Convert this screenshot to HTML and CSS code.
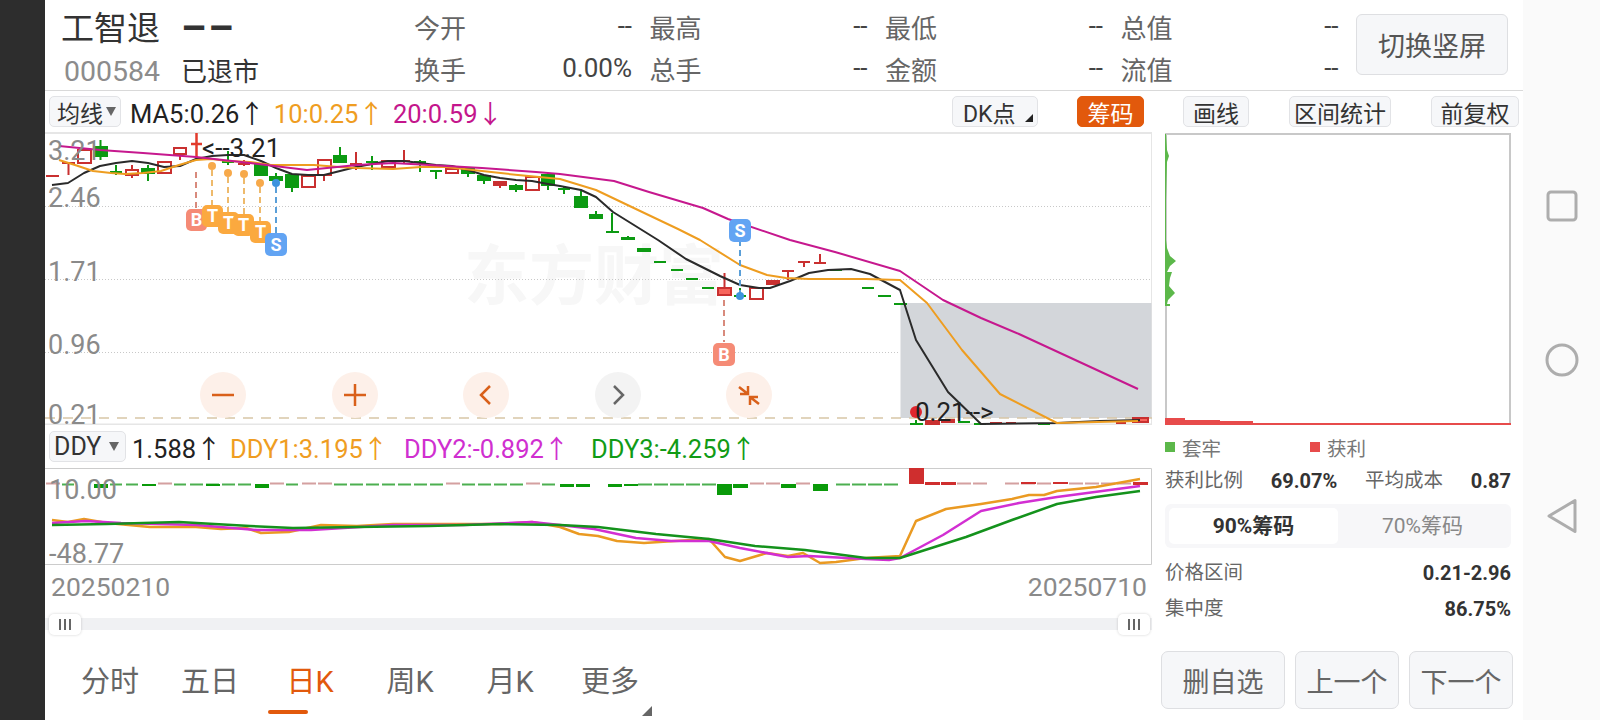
FILE: index.html
```html
<!DOCTYPE html>
<html lang="zh-CN">
<head>
<meta charset="utf-8">
<title>工智退 000584</title>
<link rel="stylesheet" href="styles.css">
</head>
<body>
<div class="app">
  <div class="gutter"></div>
  <main class="main">
    <header class="header">
      <div class="identity">
        <div class="name-row"><span class="name">工智退</span><span class="price">––</span></div>
        <div class="code-row"><span class="code">000584</span><span class="status">已退市</span></div>
      </div>
      <div class="quotes">
        <div class="quote"><span>今开</span><b>--</b></div>
        <div class="quote"><span>最高</span><b>--</b></div>
        <div class="quote"><span>最低</span><b>--</b></div>
        <div class="quote"><span>总值</span><b>--</b></div>
        <div class="quote"><span>换手</span><b>0.00%</b></div>
        <div class="quote"><span>总手</span><b>--</b></div>
        <div class="quote"><span>金额</span><b>--</b></div>
        <div class="quote"><span>流值</span><b>--</b></div>
      </div>
      <button class="rotate">切换竖屏</button>
    </header>

    <div class="toolbar">
      <span class="tool select ma-select">均线<i class="caret"></i></span>
      <span class="legend ma-legend">
        <span class="c-black">MA5:0.26↑</span>
        <span class="c-orange">10:0.25↑</span>
        <span class="c-pink">20:0.59↓</span>
      </span>
      <span class="tool dk">DK点<i class="corner"></i></span>
      <span class="tool chip-on">筹码</span>
      <span class="tool draw">画线</span>
      <span class="tool stat">区间统计</span>
      <span class="tool adj">前复权</span>
    </div>

    <div class="body">
      <section class="charts">
        <div class="chart">
          <div class="watermark">东方财富</div>
          <svg class="plot" width="1107" height="293" viewBox="45 132 1107 293">
            <path class="frame" d="M45 133H1152V425M45 424.5H1152"/>
            <path class="grid" d="M45 206.5H1152M45 279.5H1152M45 352.5H900"/>
            <rect class="zone" x="900.5" y="303" width="251" height="115"/>
            <path class="base" d="M45 418H1152"/>

            <path class="gc" d="M94 147h13v9h-13zM100.500 140V160M110 172h12M116 165V175M142 169h12v4h-12zM148 165V181M222 162h12M228 151V165M255 165h12v10h-12zM270 177h12v3h-12zM276 173V183M286 175h12v12h-12zM292 187V192M334 156h12v6h-12zM340 147V156M366 162h12M372 156V170M414 162h12M420 160V172M430 171h12M436 171V179M462 168h12v5h-12zM468 173V177M478 176h12v4h-12zM484 180V184M510 186h12v3h-12zM516 184V192M542 175h12v10h-12zM548 173V190M558 189h12M564 186V194M575 197h12v10h-12zM581 191V197M590 215h12v3h-12zM596 211V215M606 232h13M612 213V232M622 238h12v1h-12zM628 236V238M638 249h12v2h-12zM654 262h12M671 270h12M686 279h12M702 288h12M734 296h12M740 288V299M830 270h12M846 279h12M862 288h12M878 296h13M894 304h13M910 424h13M916 420V425M958 422h12M974 424h12M1038 424h12"/>
            <path class="rc" d="M46 176h13M62 163h13M68.500 163V175M78 150h13v13h-13zM126 170h12v5h-12zM132 165V170M132 175V178M158 162h13v11h-13zM174 148h12v6h-12zM180 154V160M238 164h12M244 160V166M302 176h13v11h-13zM318 160h13v15h-13zM324 175V181M350 164h12M356 152V170M382 161h13v6h-13zM398 161h12M404 150V163M446 169h12v4h-12zM500 174V174M526 177h13v13h-13zM750 288h13v11h-13zM782 271h12M788 271V280M798 262h12M804 262V267M814 263h12M820 254V263M990 423h12M1006 423h10M1116 423h10"/>
            <path class="rf" d="M494 182h12v3h-12zM500 185V188M767 281h12v3h-12zM926 421h13v4h-13zM942 420h12v2h-12z"/>
            <path class="rb" d="M191 144h11M196.500 133V158"/>
            <path class="rp" d="M718 288h13v7h-13zM724.500 273V288M1133 418h15v4h-15z"/>

            <polyline class="ma5" points="52,185 68,183 84,173 100,166 116,163 132,161 148,163 164,167 180,166 196,159 212,156 228,155 244,155 261,161 276,168 292,174 308,175 324,175 340,171 356,167 372,164 388,161 404,161 420,163 436,165 452,166 468,170 484,175 500,178 516,180 532,181 548,184 560,186 581,190 596,197 613,212 658,240 686,259 720,276 740,285 759,288 770,288 790,281 809,273 828,270 851,269 870,274 885,282 900,290 916,340 948,392 981,424 1057,423 1100,421 1140,420"/>
            <polyline class="ma10" points="59,160 75,165 93,171 111,173 125,174 143,173 161,171 179,165 196,160 211,159 228,161 250,162 271,165 292,165 314,165 339,167 357,168 393,169 421,167 446,167 482,171 518,175 560,179 596,190 638,210 678,229 700,240 740,265 767,275 786,278 809,279 866,279 900,280 927,303 962,350 1000,394 1057,423 1138,421"/>
            <polyline class="ma20" points="59,146 100,150 143,153 196,157 250,163 307,170 357,165 393,163 429,165 482,168 536,172 560,174 614,181 649,192 703,208 728,219 790,240 835,252 900,271 943,300 981,318 1019,334 1138,389"/>

            <path class="d-b" d="M196 172V210"/>
            <path class="d-t" d="M212 170V208M228 177V214M244 178V216M260 187V222"/>
            <path class="d-s" d="M276 187V234M740 240V296"/>
            <path class="d-b" d="M724 300V342"/>
            <circle class="dot-t" cx="212" cy="166" r="4"/>
            <circle class="dot-t" cx="228" cy="173" r="4"/>
            <circle class="dot-t" cx="244" cy="174" r="4"/>
            <circle class="dot-t" cx="260" cy="183" r="4"/>
            <circle class="dot-s" cx="276" cy="183" r="4"/>
            <circle class="dot-s" cx="740" cy="296" r="4"/>
            <circle class="dot-r" cx="916" cy="412" r="6"/>

            <rect class="bd-b" x="186" y="209" width="21" height="22" rx="5"/><text class="bd-text" x="196.500" y="226">B</text>
            <rect class="bd-t" x="202" y="205" width="21" height="22" rx="5"/><text class="bd-text" x="212.500" y="222">T</text>
            <rect class="bd-t" x="218" y="212" width="21" height="22" rx="5"/><text class="bd-text" x="228.500" y="229">T</text>
            <rect class="bd-t" x="233" y="214" width="21" height="22" rx="5"/><text class="bd-text" x="243.500" y="231">T</text>
            <rect class="bd-t" x="250" y="221" width="21" height="22" rx="5"/><text class="bd-text" x="260.500" y="238">T</text>
            <rect class="bd-s" x="265" y="233" width="22" height="23" rx="5"/><text class="bd-text" x="276" y="251">S</text>
            <rect class="bd-s" x="729" y="219" width="22" height="23" rx="5"/><text class="bd-text" x="740" y="237">S</text>
            <rect class="bd-b" x="713" y="343" width="22" height="23" rx="5"/><text class="bd-text" x="724" y="361">B</text>

            <text class="axis" x="48" y="160">3.21</text>
            <text class="axis" x="48" y="207">2.46</text>
            <text class="axis" x="48" y="281">1.71</text>
            <text class="axis" x="48" y="354">0.96</text>
            <text class="axis" x="48" y="424">0.21</text>
            <text class="note" x="202" y="157">&lt;--3.21</text>
            <text class="note" x="915" y="421">0.21--&gt;</text>
          </svg>
          <div class="zoom-controls">
            <span class="round"><svg width="24" height="24" viewBox="0 0 24 24"><path class="ico" d="M1 12H23"/></svg></span>
            <span class="round"><svg width="24" height="24" viewBox="0 0 24 24"><path class="ico" d="M1 12H23M12 1V23"/></svg></span>
            <span class="round"><svg width="24" height="24" viewBox="0 0 24 24"><path class="ico" d="M16 3L7 12L16 21"/></svg></span>
            <span class="round off"><svg width="24" height="24" viewBox="0 0 24 24"><path class="ico-off" d="M8 3L17 12L8 21"/></svg></span>
            <span class="round"><svg width="24" height="24" viewBox="0 0 24 24"><path class="ico" d="M2 4L11 11M11 3V11H3M22 21L13 14M13 22V14H21"/></svg></span>
          </div>
        </div>

        <div class="ddy-bar">
          <span class="tool select ddy-select">DDY<i class="caret"></i></span>
          <span class="legend ddy-val c-black">1.588↑</span>
          <span class="legend ddy1 c-orange">DDY1:3.195↑</span>
          <span class="legend ddy2 c-violet">DDY2:-0.892↑</span>
          <span class="legend ddy3 c-green">DDY3:-4.259↑</span>
        </div>

        <div class="sub-chart">
          <svg class="plot" width="1107" height="97" viewBox="45 468 1107 97">
            <path class="frame2" d="M45 468.500H1151.500V564.500H45"/>
            <path class="bar-gt" d="M62 484.500h12M110 484.500h12M126 484.500h12M174 484.500h12M190 484.500h13M206 484.500h13M222 484.500h13M238 484.500h13M286 484.500h12M334 484.500h13M350 484.500h13M366 484.500h13M382 484.500h13M398 484.500h13M414 484.500h13M430 484.500h13M462 484.500h13M478 484.500h13M494 484.500h13M510 484.500h13M542 484.500h13M638 484.500h14M654 484.500h14M670 484.500h14M686 484.500h14M702 484.500h14M836 484.500h14M852 484.500h14M868 484.500h14M884 484.500h14"/>
            <path class="bar-rt" d="M46 483.500h14M158 483.500h14M270 483.500h14M302 483.500h14M318 483.500h14M446 483.500h14M526 483.500h14M750 483.500h14M766 483.500h14M772 483.500h1M796 483.500h14M957 483.500h14M973 483.500h14M1005 483.500h14M1021 483.500h14M1037 483.500h14M1069 483.500h14M1085 483.500h14M1101 483.500h14M1117 483.500h14"/>
            <path class="bar-g" d="M94 484h14v4h-14zM142 484h14v2h-14zM206 484h14v2h-14zM255 484h14v4h-14zM560 484h14v3h-14zM576 484h14v3h-14zM608 484h14v3h-14zM624 484h14v2h-14zM717 484h15v11h-15zM733 484h15v4h-15zM781 484h15v4h-15zM813 484h15v7h-15z"/>
            <path class="bar-r" d="M909 468h15v16h-15zM925 482h15v3h-15zM941 482h15v3h-15zM1021 482h15v2h-15zM1053 482h15v2h-15zM1133 482h15v3h-15z"/>
            <polyline class="l-orange" points="52,520 68,522 84,519 107,523 150,527 196,527 221,529 246,528 261,533 289,532 321,525 357,526 393,524 500,524 532,522 560,527 579,534 598,536 617,541 644,543 675,541 709,539 725,557 740,561 767,553 788,556 803,553 820,563 836,562 866,558 900,556 916,521 946,509 981,504 1012,499 1029,495 1044,495 1057,491 1096,487 1140,479"/>
            <polyline class="l-violet" points="52,523 86,521 121,523 196,525 257,530 311,530 393,525 464,525 532,522 560,525 594,529 636,538 671,541 709,541 740,548 788,557 809,556 866,559 889,560 900,558 943,535 981,511 1019,503 1057,497 1140,486"/>
            <polyline class="l-green" points="52,525 107,524 179,522 250,526 293,528 357,527 429,526 500,524 560,525 598,527 656,534 709,539 755,546 805,550 866,558 900,558 966,537 1012,520 1057,504 1096,497 1140,491"/>
            <text class="axis" x="49" y="499">10.00</text>
            <text class="axis" x="49" y="563">-48.77</text>
          </svg>
        </div>

        <div class="dates"><span>20250210</span><span>20250710</span></div>
        <div class="slider">
          <span class="handle"><i></i><i></i><i></i></span>
          <span class="handle"><i></i><i></i><i></i></span>
        </div>
        <nav class="tabs">
          <span class="tab">分时</span>
          <span class="tab">五日</span>
          <span class="tab active">日K</span>
          <span class="tab">周K</span>
          <span class="tab">月K</span>
          <span class="tab more">更多<i class="corner big"></i></span>
        </nav>
      </section>

      <aside class="side">
        <svg class="chips" width="346" height="293" viewBox="1165 132 346 293">
          <path class="chip-frame" d="M1166 425V134H1510V425"/>
          <path class="chip-green" d="M1165 134H1166L1167 150L1169 156L1167 162L1166 200L1166 240L1167 248L1170 256L1176 261L1170 266L1167 272L1172 272L1170 278L1169 286L1175 293L1168 300L1167 304H1170V306H1165Z"/>
          <path class="chip-red" d="M1165 425V418H1185V420H1220V421H1253V423H1511V425Z"/>
        </svg>
        <div class="chip-legend">
          <span class="key"><i class="sq-g"></i>套牢</span>
          <span class="key"><i class="sq-r"></i>获利</span>
        </div>
        <div class="row stats"><span>获利比例</span><b>69.07%</b><span>平均成本</span><b>0.87</b></div>
        <div class="seg"><span class="seg-on">90%筹码</span><span>70%筹码</span></div>
        <div class="row range"><span>价格区间</span><b>0.21-2.96</b></div>
        <div class="row conc"><span>集中度</span><b>86.75%</b></div>
        <div class="actions">
          <button class="act act-wide">删自选</button>
          <button class="act">上一个</button>
          <button class="act">下一个</button>
        </div>
      </aside>
    </div>
  </main>
  <aside class="sysnav">
    <svg width="32" height="32" viewBox="0 0 32 32"><rect class="sys" x="2" y="2" width="28" height="28" rx="3"/></svg>
    <svg width="34" height="34" viewBox="0 0 34 34"><circle class="sys" cx="17" cy="17" r="15"/></svg>
    <svg width="32" height="36" viewBox="0 0 32 36"><path class="sys" d="M29 2.500V33.500L3 18Z"/></svg>
  </aside>
</div>
</body>
</html>
```

FILE: styles.css
```css
* { box-sizing: border-box; }
html, body { margin: 0; padding: 0; }
body {
  width: 1600px;
  height: 720px;
  overflow: hidden;
  background: #fff;
  font-family: Roboto, "Noto Sans CJK SC", sans-serif;
  color: #222;
}
i { font-style: normal; }
button { font-family: inherit; cursor: default; }

.app { display: flex; width: 1600px; height: 720px; }
.gutter { width: 45px; background: #2d2d2d; flex: none; }
.main { width: 1478px; flex: none; display: flex; flex-direction: column; background: #fff; }
.sysnav {
  width: 77px;
  flex: none;
  background: #fafafa;
  display: flex;
  flex-direction: column;
  align-items: center;
  padding-top: 190px;
  gap: 121px;
}
.sys { fill: none; stroke: #adadad; stroke-width: 3; stroke-linejoin: round; }

/* header */
.header {
  height: 91px;
  border-bottom: 1px solid #d9d9d9;
  display: flex;
  flex: none;
  position: relative;
}
.identity { width: 369px; padding-left: 16px; }
.name-row { display: flex; align-items: center; height: 58px; }
.name { font-size: 33px; color: #333; width: 120px; line-height: 58px; }
.price { font-size: 40px; font-weight: 700; color: #333; line-height: 58px; letter-spacing: 2px; }
.code-row { display: flex; align-items: center; height: 28px; }
.code { font-size: 28.500px; color: #8c8c8c; width: 120px; padding-left: 3px; line-height: 28px; }
.status { font-size: 26px; color: #333; line-height: 28px; }
.quotes {
  display: grid;
  grid-template-columns: repeat(4, 218px);
  column-gap: 17.500px;
  grid-auto-rows: 42px;
  width: 925px;
  padding-top: 5px;
}
.quote { display: flex; justify-content: space-between; align-items: center; font-size: 26px; }
.quote span { color: #666; }
.quote b { font-weight: 400; color: #444; }
.rotate {
  position: absolute;
  left: 1311px;
  top: 14px;
  width: 152px;
  height: 61px;
  background: #f6f7f9;
  border: 1px solid #dedfe2;
  border-radius: 6px;
  font-size: 27px;
  color: #555;
  padding: 0;
}

/* toolbar */
.toolbar { height: 41px; flex: none; display: flex; align-items: center; padding: 0 4px; }
.tool {
  height: 31px;
  display: flex;
  align-items: center;
  justify-content: center;
  background: #f6f7f9;
  border: 1px solid #e2e3e6;
  border-radius: 5px;
  font-size: 23px;
  color: #333;
  position: relative;
}
.select { justify-content: flex-start; padding-left: 6px; }
.ma-select { width: 72px; padding-left: 7px; }
.caret {
  width: 0;
  height: 0;
  margin-left: 3px;
  border: 5px solid transparent;
  border-top: 9px solid #666;
  border-bottom: 0;
}
.corner {
  position: absolute;
  right: 4px;
  bottom: 4px;
  width: 8px;
  height: 8px;
  background: #222;
  clip-path: polygon(100% 0, 100% 100%, 0 100%);
}
.legend { font-size: 25.500px; white-space: nowrap; }
.ma-legend { display: flex; margin-left: 9px; gap: 9px; }
.c-black { color: #222; }
.c-orange { color: #ef9d22; }
.c-pink { color: #c4168c; }
.c-violet { color: #d02fd0; }
.c-green { color: #119b16; }
.dk { width: 86px; margin-left: auto; justify-content: flex-start; padding-left: 10px; }
.chip-on { width: 67px; margin-left: 39px; background: #e2590c; border-color: #e2590c; color: #fff; }
.draw { width: 66px; margin-left: 39px; }
.stat { width: 102px; margin-left: 40px; }
.adj { width: 88px; margin-left: 40px; }

/* body */
.body { display: flex; flex: 1; min-height: 0; }
.charts { width: 1107px; flex: none; display: flex; flex-direction: column; }
.chart { height: 293px; flex: none; position: relative; }
.plot { display: block; position: relative; }
.watermark {
  position: absolute;
  left: 419px;
  top: 105px;
  font-size: 65px;
  line-height: 80px;
  font-weight: 700;
  color: #f7f7f7;
  white-space: nowrap;
}
.frame { fill: none; stroke: #e6e6e6; stroke-width: 2; }
.grid { stroke: #c8c8c8; stroke-width: 1; stroke-dasharray: 1 2; fill: none; }
.base { stroke: #d8c6a6; stroke-width: 1.500; stroke-dasharray: 10 8; fill: none; }
.zone { fill: #d3d6da; }
.gc { fill: #0c9a12; stroke: #0c9a12; stroke-width: 2; }
.rc { fill: none; stroke: #c93030; stroke-width: 2; }
.rf { fill: #c93030; stroke: #c93030; stroke-width: 2; }
.rb { fill: none; stroke: #e23b2c; stroke-width: 2.500; }
.rp { fill: #f7655c; stroke: #c93030; stroke-width: 2; }
.ma5 { fill: none; stroke: #2a2a2a; stroke-width: 2; stroke-linejoin: round; }
.ma10 { fill: none; stroke: #ee9d20; stroke-width: 2; stroke-linejoin: round; }
.ma20 { fill: none; stroke: #c6188e; stroke-width: 2; stroke-linejoin: round; }
.d-b, .d-t, .d-s { fill: none; stroke-width: 2; stroke-dasharray: 6 4; }
.d-b { stroke: #d88a7c; }
.d-t { stroke: #eeba6c; }
.d-s { stroke: #5a9fd8; }
.dot-t { fill: #f7a94a; }
.dot-s { fill: #3d93de; }
.dot-r { fill: #e0262e; }
.bd-b { fill: #f58b76; }
.bd-t { fill: #fba93f; }
.bd-s { fill: #62a4f3; }
.bd-text { fill: #fff; font-size: 18px; font-weight: 700; text-anchor: middle; font-family: Roboto, sans-serif; }
.axis { fill: #8a8a8a; font-size: 27px; font-family: Roboto, sans-serif; }
.note { fill: #222; font-size: 26px; font-family: Roboto, sans-serif; }
.zoom-controls {
  position: absolute;
  left: 155px;
  top: 240px;
  display: flex;
  gap: 85.500px;
}
.round {
  width: 46px;
  height: 46px;
  border-radius: 50%;
  background: #fdf0e9;
  display: flex;
  align-items: center;
  justify-content: center;
}
.round.off { background: #f3f3f3; }
.ico { fill: none; stroke: #d9601a; stroke-width: 2.500; }
.ico-off { fill: none; stroke: #666; stroke-width: 2.500; }

.ddy-bar { height: 43px; flex: none; display: flex; align-items: center; position: relative; padding-left: 4px; }
.ddy-select { width: 77px; padding-left: 4px; font-size: 25px; }
.ddy-select .caret { margin-left: 8px; }
.ddy-val { margin-left: 6px; width: 98px; }
.ddy1 { width: 174px; }
.ddy2 { width: 187px; }

.sub-chart { height: 97px; flex: none; }
.frame2 { fill: none; stroke: #cccccc; stroke-width: 1; }
.bar-gt { fill: none; stroke: #4caf50; stroke-width: 2; }
.bar-rt { fill: none; stroke: #d4a0a0; stroke-width: 2; }
.bar-g { fill: #0a9a0a; }
.bar-r { fill: #cf2e2e; }
.l-orange { fill: none; stroke: #ea9a22; stroke-width: 2.500; stroke-linejoin: round; }
.l-violet { fill: none; stroke: #d22fd2; stroke-width: 2.500; stroke-linejoin: round; }
.l-green { fill: none; stroke: #14921c; stroke-width: 2.500; stroke-linejoin: round; }

.dates {
  height: 53px;
  flex: none;
  display: flex;
  justify-content: space-between;
  padding: 8px 5px 0 6px;
  font-size: 26.500px;
  line-height: 28px;
  color: #8a8a8a;
}
.slider {
  height: 12px;
  flex: none;
  background: #f0f1f3;
  display: flex;
  justify-content: space-between;
  align-items: center;
  padding: 0 2px 0 4px;
}
.handle {
  width: 32px;
  height: 21px;
  background: #fff;
  border-radius: 5px;
  box-shadow: 0 0 3px rgba(0, 0, 0, .18);
  display: flex;
  align-items: center;
  justify-content: center;
  gap: 3px;
}
.handle i { width: 2px; height: 11px; background: #666; }

.tabs {
  display: grid;
  grid-template-columns: repeat(6, 100px);
  padding: 36px 0 0 15px;
}
.tab { position: relative; text-align: center; font-size: 29px; line-height: 32px; color: #666; }
.tab.active { color: #e2590c; }
.tab.active::after {
  content: "";
  display: block;
  width: 40px;
  height: 4px;
  margin: 12px 0 0 8px;
  border-radius: 2px;
  background: #e2590c;
}
.more .corner.big { right: 8px; bottom: -2px; width: 10px; height: 10px; background: #666; }

/* right column */
.side { width: 371px; flex: none; padding-left: 13px; display: flex; flex-direction: column; }
.chips { display: block; flex: none; }
.chip-frame { fill: none; stroke: #c8c8c8; stroke-width: 2; }
.chip-green { fill: #5cb84a; }
.chip-red { fill: #e74b4b; }
.chip-legend { height: 44px; flex: none; display: grid; grid-template-columns: 145px 145px; align-items: center; }
.key { display: flex; align-items: center; font-size: 19.500px; color: #777; }
.sq-g, .sq-r { width: 10px; height: 10px; margin-right: 7px; }
.sq-g { background: #5cb84a; }
.sq-r { background: #e74b4b; }
.row {
  display: flex;
  justify-content: space-between;
  align-items: center;
  width: 346px;
  font-size: 19.500px;
  line-height: 24px;
  color: #666;
}
.row b { color: #333; font-size: 20px; font-weight: 700; }
.seg {
  width: 346px;
  height: 44px;
  margin-top: 11px;
  padding: 4px;
  display: grid;
  grid-template-columns: 169px 1fr;
  background: #f7f7f9;
  border-radius: 6px;
  font-size: 21px;
  line-height: 36px;
  text-align: center;
  color: #888;
}
.seg-on { background: #fff; border-radius: 5px; font-weight: 700; color: #333; }
.range { margin-top: 13px; }
.conc { margin-top: 12px; }
.actions { display: flex; gap: 10px; margin: 30px 0 0 -4px; }
.act {
  width: 104px;
  height: 58px;
  padding: 0;
  background: #f6f7f9;
  border: 1px solid #dedfe2;
  border-radius: 7px;
  font-size: 27px;
  color: #666;
}
.act-wide { width: 124px; }
```
